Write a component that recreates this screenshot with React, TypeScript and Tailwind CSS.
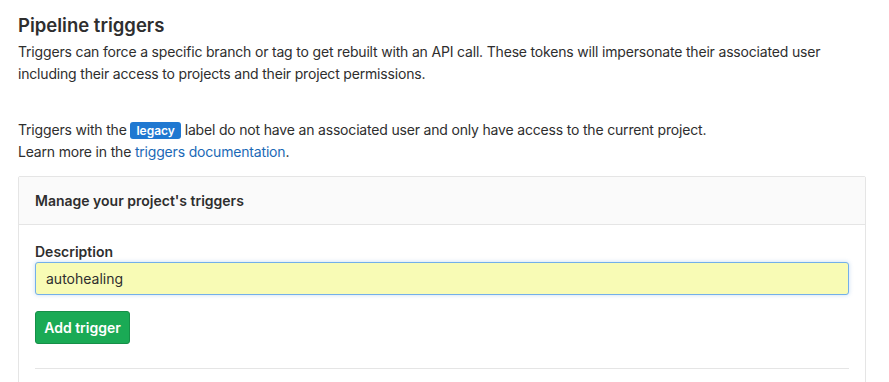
export default function App() {
  return (
    <div
      className="w-[889px] h-[382px] overflow-hidden bg-white text-[#2e2e2e] px-[18px] pt-[8px]"
      style={{ fontFamily: 'Inter, "Noto Sans", sans-serif' }}
    >
      <h4 className="text-[18.5px] font-semibold leading-[30px] mt-[2px]">Pipeline triggers</h4>
      <p className="text-[14px] tracking-[-0.18px] leading-[22px] mt-[1px]">
        Triggers can force a specific branch or tag to get rebuilt with an API call. These tokens will impersonate their associated user
        <br />
        including their access to projects and their project permissions.
      </p>
      <p className="text-[14px] tracking-[-0.18px] leading-[22px] mt-[34px]">
        Triggers with the{" "}
        <span className="inline-block bg-[#1f78d1] text-white text-[12px] tracking-normal font-semibold leading-[17px] px-[6px] rounded-[3px]">
          legacy
        </span>{" "}
        label do not have an associated user and only have access to the current project.
        <br />
        Learn more in the <a className="text-[#1b69b6]">triggers documentation</a>.
      </p>
      <div className="mt-[13px] w-[848px] border border-[#e5e5e5] rounded-[2px]">
        <div className="h-[48px] bg-[#fafafa] border-b border-[#e5e5e5] px-[16px] flex items-center text-[14px] font-semibold">
          Manage your project's triggers
        </div>
        <div className="px-[16px] pt-[18px]">
          <label className="block text-[14px] font-semibold leading-[18px]">Description</label>
          <div className="mt-[1px] h-[33px] border border-[#73afea] bg-[#f8fbb5] rounded-[3px] shadow-[0_0_4px_rgba(31,120,209,0.25)] px-[10px] flex items-center text-[14px]">
            autohealing
          </div>
          <button className="mt-[16px] h-[33px] w-[95px] bg-[#1aaa55] border border-[#168f48] text-white text-[14px] font-semibold rounded-[3px]">
            Add trigger
          </button>
          <div className="mt-[24px] border-t border-[#e5e5e5]" />
          <div className="h-[20px]" />
        </div>
      </div>
    </div>
  );
}
